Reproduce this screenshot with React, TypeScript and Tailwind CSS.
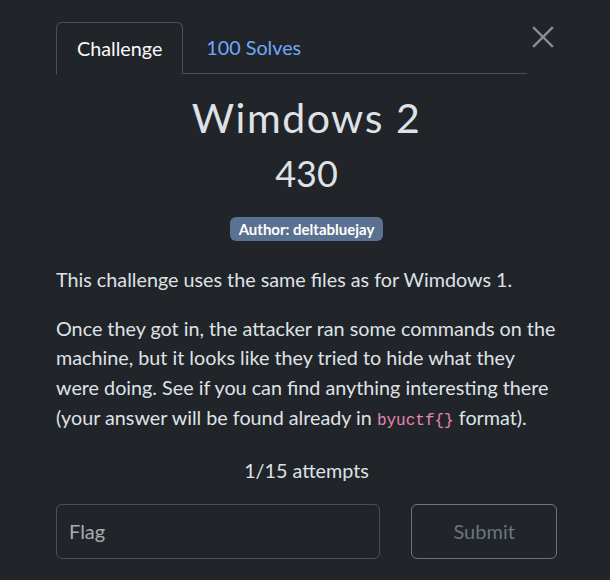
import React from "react";

export default function App() {
  return (
    <div
      className="w-[610px] h-[580px] bg-[#212529] text-[#dee2e6] overflow-hidden"
      style={{ fontFamily: "Lato, 'Noto Sans', sans-serif" }}
    >
      <div className="pl-[56px] pr-[53px] pt-[22px]">
        <div className="flex items-start">
          <div className="flex flex-1 border-b border-[#495057] h-[52px]">
            <div className="h-[52px] px-[20px] flex items-center border border-b-0 border-[#495057] rounded-t-[6px] bg-[#212529] mb-[-1px] text-[19.75px] text-[#f8f9fa]">
              Challenge
            </div>
            <div className="h-[51px] px-[23px] flex items-center text-[19.75px] text-[#6ea8fe]">
              100 Solves
            </div>
          </div>
          <button className="w-[28px] h-[28px] flex items-center justify-center mt-[1px] ml-[2px]">
            <svg width="22" height="22" viewBox="0 0 22 22">
              <path d="M2 2 L20 20 M20 2 L2 20" stroke="#8b8e92" strokeWidth="2.4" strokeLinecap="square" />
            </svg>
          </button>
        </div>

        <div className="flex flex-col items-center">
          <h3 className="mt-[18px] text-[41px] leading-[52px] tracking-[1.5px] text-[#dee2e6]">Wimdows 2</h3>
          <h4 className="mt-[7px] text-[36px] leading-[44px] text-[#dee2e6]">430</h4>
          <span className="mt-[22px] h-[24px] px-[9px] rounded-[6px] bg-[#5b7191] text-white text-[15px] font-bold flex items-center">
            Author: deltabluejay
          </span>
        </div>

        <div className="mt-[24px] text-[19.75px] leading-[29.7px] text-[#dee2e6]">
          <p className="mb-[19px]">This challenge uses the same files as for Wimdows 1.</p>
          <p>
            Once they got in, the attacker ran some commands on the machine, but it looks like they tried to hide what they were doing. See if you can find anything interesting there (your answer will be found already in{" "}
            <code
              className="text-[#e685b5] text-[16px] font-normal"
              style={{ fontFamily: "'Liberation Mono', 'DejaVu Sans Mono', monospace" }}
            >
              byuctf{"{}"}
            </code>{" "}
            format).
          </p>
        </div>

        <div className="mt-[20px] text-center text-[19.75px] leading-[27px]">1/15 attempts</div>

        <div className="mt-[20px] flex gap-[31px]">
          <div className="w-[325px] h-[55px] border border-[#495057] rounded-[6px] flex items-center px-[12px] text-[20px] text-[#a8acb0]">
            Flag
          </div>
          <div className="w-[146px] h-[55px] border border-[#6c757d] rounded-[6px] flex items-center justify-center text-[20px] text-[#6c757d]">
            Submit
          </div>
        </div>
      </div>
    </div>
  );
}
